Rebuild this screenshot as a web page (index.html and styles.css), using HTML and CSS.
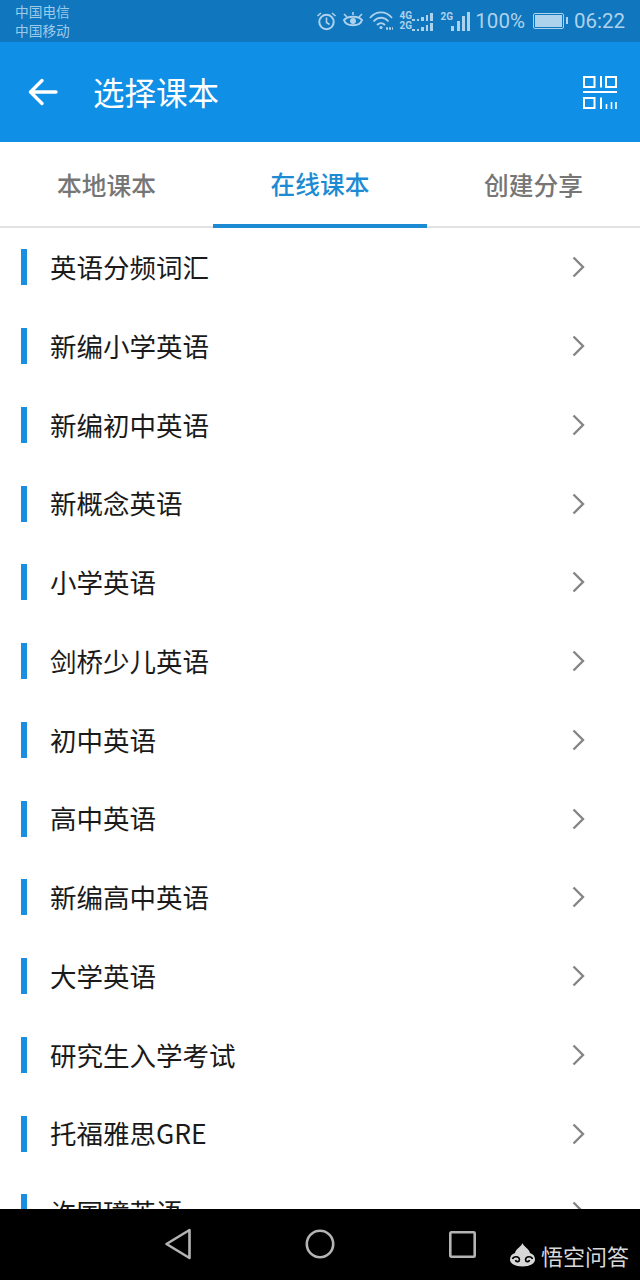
FILE: index.html
```html
<!DOCTYPE html>
<html lang="zh-CN">
<head>
<meta charset="utf-8">
<title>选择课本</title>
<link rel="stylesheet" href="styles.css">
</head>
<body>
<div class="phone">
  <div class="status">
    <div class="carriers"><span>中国电信</span><span>中国移动</span></div>
    <div class="status-right">
      <svg class="ic" width="21" height="20" viewBox="0 0 21 20" fill="none" stroke="currentColor" stroke-width="2"><circle cx="10.500" cy="11" r="7.200"/><path d="M10.500 6.500V11.500L13.500 13.500" stroke-width="1.600"/><path d="M1.500 5L5 2M19.500 5L16 2" stroke-width="1.600"/></svg>
      <svg class="ic eye" width="22" height="20" viewBox="0 0 22 20" fill="none" stroke="currentColor" stroke-width="2"><path d="M2 9C5 4.500 17 4.500 20 9C18 16 4 16 2 9Z"/><circle cx="11" cy="10" r="3" fill="currentColor" stroke="none"/><path d="M2 3L5 6M20 3L17 6M11 1V4" stroke-width="1.600"/></svg>
      <svg class="ic wifi" width="25" height="20" viewBox="0 0 25 20" fill="none" stroke="currentColor" stroke-width="1.800"><path d="M1 7C7-.5 17-.5 23 7"/><path d="M4.500 10.500C9 5.500 15 5.500 19.500 10.500"/><path d="M8 14C10.500 11.500 13.500 11.500 16 14"/><circle cx="12" cy="16.500" r="1.600" fill="currentColor" stroke="none"/><path d="M17 17.500H24" stroke-width="2.500" stroke-dasharray="2 1"/></svg>
      <div class="sim sim-double">
        <div class="sim-line"><b>4G</b><i class="dots"><u class="h2"></u><u class="h2"></u><u class="h4"></u><u class="h6"></u><u class="h8"></u></i></div>
        <div class="sim-line"><b>2G</b><i class="dots"><u class="h2"></u><u class="h2"></u><u class="h4"></u><u class="h6"></u><u class="h8"></u></i></div>
      </div>
      <div class="sim sim-single">
        <b>2G</b>
        <i class="bars"><u class="b1"></u><u class="b2"></u><u class="b3"></u><u class="b4"></u></i>
      </div>
      <span class="pct">100%</span>
      <div class="battery"><div class="battery-fill"></div></div>
      <span class="clock">06:22</span>
    </div>
  </div>

  <header class="appbar">
    <svg class="back" width="30" height="28" viewBox="0 0 30 28" fill="none" stroke="#fff" stroke-width="3.400" stroke-linecap="round" stroke-linejoin="round"><path d="M28 14H3M14 2.500L2.500 14L14 25.500"/></svg>
    <h1 class="title">选择课本</h1>
    <svg class="scan" width="34" height="33" viewBox="0 0 34 33" fill="none" stroke="#fff" stroke-width="2"><rect x="1" y="1" width="10.500" height="10"/><path d="M18 0V11.500"/><rect x="23" y="1" width="10" height="10"/><path d="M0 16H34"/><rect x="1" y="22" width="10.500" height="10"/><path d="M18 21.500V33"/><path d="M23.500 28V33M28.500 26V33M33 26V33" stroke-width="1.600"/></svg>
  </header>

  <nav class="tabs">
    <div class="tab">本地课本</div>
    <div class="tab active">在线课本</div>
    <div class="tab">创建分享</div>
  </nav>

  <main class="list">
    <div class="row"><i class="mark"></i><span class="name">英语分频词汇</span><svg class="chev" width="14" height="22" viewBox="0 0 14 22" fill="none" stroke="#858585" stroke-width="2.400"><path d="M2.500 1.500L12 11L2.500 20.500"/></svg></div>
    <div class="row"><i class="mark"></i><span class="name">新编小学英语</span><svg class="chev" width="14" height="22" viewBox="0 0 14 22" fill="none" stroke="#858585" stroke-width="2.400"><path d="M2.500 1.500L12 11L2.500 20.500"/></svg></div>
    <div class="row"><i class="mark"></i><span class="name">新编初中英语</span><svg class="chev" width="14" height="22" viewBox="0 0 14 22" fill="none" stroke="#858585" stroke-width="2.400"><path d="M2.500 1.500L12 11L2.500 20.500"/></svg></div>
    <div class="row"><i class="mark"></i><span class="name">新概念英语</span><svg class="chev" width="14" height="22" viewBox="0 0 14 22" fill="none" stroke="#858585" stroke-width="2.400"><path d="M2.500 1.500L12 11L2.500 20.500"/></svg></div>
    <div class="row"><i class="mark"></i><span class="name">小学英语</span><svg class="chev" width="14" height="22" viewBox="0 0 14 22" fill="none" stroke="#858585" stroke-width="2.400"><path d="M2.500 1.500L12 11L2.500 20.500"/></svg></div>
    <div class="row"><i class="mark"></i><span class="name">剑桥少儿英语</span><svg class="chev" width="14" height="22" viewBox="0 0 14 22" fill="none" stroke="#858585" stroke-width="2.400"><path d="M2.500 1.500L12 11L2.500 20.500"/></svg></div>
    <div class="row"><i class="mark"></i><span class="name">初中英语</span><svg class="chev" width="14" height="22" viewBox="0 0 14 22" fill="none" stroke="#858585" stroke-width="2.400"><path d="M2.500 1.500L12 11L2.500 20.500"/></svg></div>
    <div class="row"><i class="mark"></i><span class="name">高中英语</span><svg class="chev" width="14" height="22" viewBox="0 0 14 22" fill="none" stroke="#858585" stroke-width="2.400"><path d="M2.500 1.500L12 11L2.500 20.500"/></svg></div>
    <div class="row"><i class="mark"></i><span class="name">新编高中英语</span><svg class="chev" width="14" height="22" viewBox="0 0 14 22" fill="none" stroke="#858585" stroke-width="2.400"><path d="M2.500 1.500L12 11L2.500 20.500"/></svg></div>
    <div class="row"><i class="mark"></i><span class="name">大学英语</span><svg class="chev" width="14" height="22" viewBox="0 0 14 22" fill="none" stroke="#858585" stroke-width="2.400"><path d="M2.500 1.500L12 11L2.500 20.500"/></svg></div>
    <div class="row"><i class="mark"></i><span class="name">研究生入学考试</span><svg class="chev" width="14" height="22" viewBox="0 0 14 22" fill="none" stroke="#858585" stroke-width="2.400"><path d="M2.500 1.500L12 11L2.500 20.500"/></svg></div>
    <div class="row"><i class="mark"></i><span class="name">托福雅思GRE</span><svg class="chev" width="14" height="22" viewBox="0 0 14 22" fill="none" stroke="#858585" stroke-width="2.400"><path d="M2.500 1.500L12 11L2.500 20.500"/></svg></div>
    <div class="row"><i class="mark"></i><span class="name">许国璋英语</span><svg class="chev" width="14" height="22" viewBox="0 0 14 22" fill="none" stroke="#858585" stroke-width="2.400"><path d="M2.500 1.500L12 11L2.500 20.500"/></svg></div>
  </main>

  <footer class="navbar">
    <svg class="nav-back" width="28" height="32" viewBox="0 0 28 32" fill="none" stroke="#b4b4b4" stroke-width="2.600" stroke-linejoin="round"><path d="M25.500 2V30L2.500 16Z"/></svg>
    <svg class="nav-home" width="30" height="30" viewBox="0 0 30 30" fill="none" stroke="#b4b4b4" stroke-width="2.600"><circle cx="15" cy="15" r="13.200"/></svg>
    <svg class="nav-recent" width="27" height="27" viewBox="0 0 27 27" fill="none" stroke="#b4b4b4" stroke-width="2.600" stroke-linejoin="round"><rect x="1.300" y="1.300" width="24.400" height="24.400" rx="1"/></svg>
    <div class="mark-wm">
      <svg width="25" height="24" viewBox="0 0 25 24"><path d="M12.500 0C13.500 4 19 5 20 10C23 11 25 13 25 16.500C25 20.500 20 23.500 12.500 23.500C5 23.500 0 20.500 0 16.500C0 13 2 11 5 10C6 5 11.500 4 12.500 0Z" fill="#d8d8d8"/><path d="M2.500 16C3.500 13 9 13 9.500 16.500C9.500 19 6 19.500 5.500 17M22.500 16C21.500 13 16 13 15.500 16.500C15.500 19 19 19.500 19.500 17" fill="none" stroke="#000" stroke-width="1.600"/></svg>
      <span class="wm-text">悟空问答</span>
    </div>
  </footer>
</div>
</body>
</html>
```

FILE: styles.css
```css
* { box-sizing: border-box; }
html, body { margin: 0; padding: 0; }
body { background: #fff; font-family: "Noto Sans CJK SC", "Noto Sans", sans-serif; }
i, u, b { display: block; font-style: normal; text-decoration: none; }

.phone { width: 640px; height: 1280px; display: flex; flex-direction: column; overflow: hidden; position: relative; }

.status { flex: 0 0 42px; background: #1076bd; color: #aed2ec; display: flex; justify-content: space-between; align-items: center; padding: 0 15px; }
.carriers { display: flex; flex-direction: column; font-size: 13.700px; line-height: 19.500px; color: #9fcbea; }
.status-right { display: flex; align-items: center; height: 100%; }
.ic { display: block; }
.eye { margin-left: 5px; }
.wifi { margin-left: 5px; }
.sim { font-family: "Roboto", sans-serif; }
.sim b { font-size: 10px; line-height: 10px; font-weight: 700; width: 11px; }
.sim-double { margin-left: 5px; width: 33px; display: flex; flex-direction: column; }
.sim-line { display: flex; align-items: flex-end; height: 10px; gap: 2px; }
.dots { display: flex; align-items: flex-end; gap: 2px; }
.dots u { width: 2.500px; background: currentColor; }
.h2 { height: 2px; } .h4 { height: 4px; } .h6 { height: 6px; } .h8 { height: 8px; }
.sim-single { margin-left: 8px; display: flex; align-items: flex-end; height: 19px; }
.sim-single b { align-self: flex-start; }
.bars { display: flex; align-items: flex-end; gap: 2.300px; margin-left: 0; }
.bars u { width: 3px; background: currentColor; }
.b1 { height: 5px; } .b2 { height: 10px; } .b3 { height: 15px; } .b4 { height: 19px; }
.pct { font-family: "Roboto", sans-serif; font-size: 20.500px; margin-left: 5px; }
.battery { margin-left: 8px; width: 31px; height: 16px; border: 1.500px solid currentColor; border-radius: 2px; padding: 1px; position: relative; }
.battery-fill { width: 100%; height: 100%; background: currentColor; }
.battery::after { content: ""; position: absolute; right: -5.500px; top: 3px; width: 2.500px; height: 7px; background: currentColor; }
.clock { font-family: "Roboto", sans-serif; font-size: 20.500px; margin-left: 10px; }

.appbar { flex: 0 0 100px; background: #0f8fe6; display: flex; align-items: center; padding: 0 23px 0 28px; }
.back { display: block; }
.title { margin: 0 0 0 35px; font-size: 31.500px; font-weight: 400; color: #fff; flex: 1; line-height: 1; }
.scan { display: block; }

.tabs { flex: 0 0 86px; display: grid; grid-template-columns: 213px 214px 213px; border-bottom: 2px solid #e2e2e2; }
.tab { display: flex; align-items: center; justify-content: center; margin-bottom: -2px; padding-bottom: 2px; font-size: 24.700px; font-weight: 500; color: #767676; height: 86px; }
.tab.active { color: #1c8bd3; border-bottom: 4px solid #1c8bd3; padding-bottom: 0; }

.list { flex: 1; overflow: hidden; }
.row { height: 78.750px; display: flex; align-items: center; padding: 0 55px 0 21px; }
.mark { width: 6px; height: 36px; background: #1a8fe0; flex: none; }
.name { margin-left: 23px; flex: 1; font-size: 26.500px; color: #1a1a1a; font-weight: 400; line-height: 1; }
.chev { display: block; flex: none; }

.navbar { flex: 0 0 71px; background: #000; display: flex; align-items: center; position: relative; }
.nav-back { position: absolute; left: 164px; top: 19px; }
.nav-home { position: absolute; left: 305px; top: 20px; }
.nav-recent { position: absolute; left: 449px; top: 22px; }
.mark-wm { position: absolute; left: 510px; top: 34px; display: flex; align-items: center; gap: 6px; color: #d8d8d8; }
.wm-text { font-size: 22px; line-height: 1; font-weight: 400; }
```
